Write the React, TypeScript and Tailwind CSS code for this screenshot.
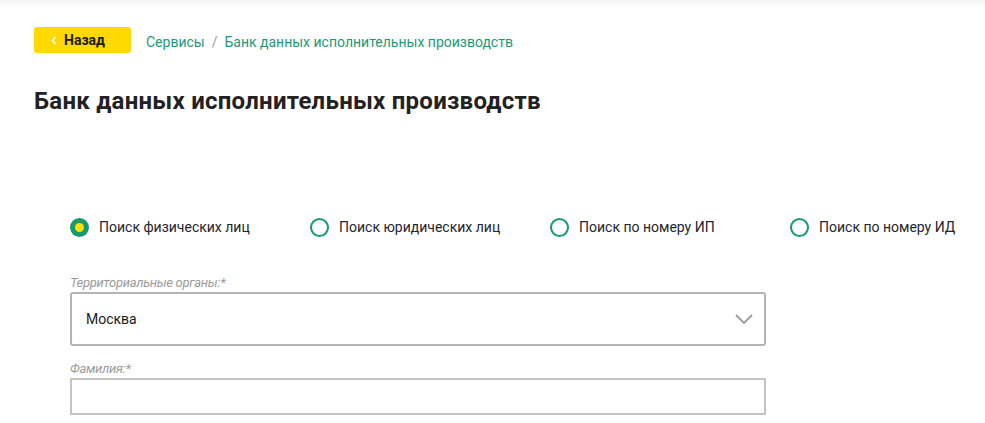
import React from "react";

function Radio({ label, checked }: { label: string; checked?: boolean }) {
  return (
    <label className="flex items-center gap-[10px] cursor-pointer">
      {checked ? (
        <span className="w-[19px] h-[19px] rounded-full bg-[#179a6c] flex items-center justify-center">
          <span className="w-[9px] h-[9px] rounded-full bg-[#ffe000]" />
        </span>
      ) : (
        <span className="w-[19px] h-[19px] rounded-full border-2 border-[#179a6c] bg-white" />
      )}
      <span className="text-[14px] text-[#24242e]">{label}</span>
    </label>
  );
}

export default function App() {
  return (
    <div
      className="w-[985px] h-[423px] bg-white overflow-hidden relative"
      style={{ fontFamily: "Roboto, 'Noto Sans', sans-serif" }}
    >
      <div className="absolute top-0 left-0 right-0 h-[7px] bg-gradient-to-b from-[#f2f2f2] to-white" />
      <div className="relative pl-[34px] pt-[27px]">
        <div className="flex items-center">
          <button className="w-[97px] h-[26px] rounded-[3px] bg-[#ffd900] flex items-center pl-[17px] gap-[7px]">
            <svg width="6" height="9" viewBox="0 0 6 9" className="mt-[1px]">
              <path d="M4.5 1 L1.5 4.5 L4.5 8" stroke="#fff" strokeWidth="1.6" fill="none" />
            </svg>
            <span className="text-[14px] font-bold text-[#1b1b1b]">Назад</span>
          </button>
          <div className="ml-[15px] text-[14px] text-[#1b9a78] flex items-center gap-[7px] mt-[4px]">
            <span>Сервисы</span>
            <span className="text-[#999]">/</span>
            <span>Банк данных исполнительных производств</span>
          </div>
        </div>
        <h1 className="mt-[33px] text-[24px] leading-[30px] font-bold tracking-[0.25px] text-[#222]">
          Банк данных исполнительных производств
        </h1>
      </div>
      <div className="pl-[70px] mt-[101px]">
        <div className="grid grid-cols-[240px_240px_240px_240px] h-[20px] items-center">
          <Radio label="Поиск физических лиц" checked />
          <Radio label="Поиск юридических лиц" />
          <Radio label="Поиск по номеру ИП" />
          <Radio label="Поиск по номеру ИД" />
        </div>
        <div className="mt-[39px] w-[696px]">
          <div className="text-[13px] italic text-[#9b9b9b] leading-[14px] tracking-[-0.3px]">Территориальные органы:*</div>
          <div className="mt-[2px] h-[54px] border-2 border-[#b4b4b4] rounded-[3px] flex items-center justify-between pl-[14px] pr-[10px]">
            <span className="text-[14px] text-[#1a1a1a]">Москва</span>
            <svg width="20" height="12" viewBox="0 0 20 12">
              <path d="M2 2 L10 10 L18 2" stroke="#9a9a9a" strokeWidth="1.8" fill="none" />
            </svg>
          </div>
          <div className="mt-[16px] text-[13px] italic text-[#9b9b9b] leading-[14px] tracking-[-0.3px]">Фамилия:*</div>
          <div className="mt-[2px] h-[37px] border-2 border-[#c4c4c4]" />
        </div>
      </div>
    </div>
  );
}
